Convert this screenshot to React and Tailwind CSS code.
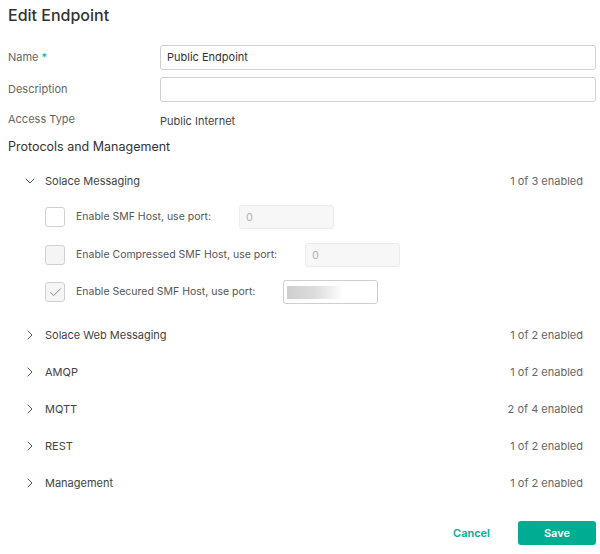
import React from 'react';
import { ChevronDown, ChevronRight, Check } from 'lucide-react';

const font = { fontFamily: 'Inter, "Noto Sans", sans-serif' };

function FieldRow({ label, required, children, className = '' }) {
  return (
    <div className={`flex items-center ${className}`}>
      <div className="w-[152px] shrink-0 text-[11px] text-[#666]">
        {label}
        {required && <span className="ml-[3px] text-[#00ad93]">*</span>}
      </div>
      <div className="flex-1">{children}</div>
    </div>
  );
}

function PortRow({ label, checked, disabled, className = '' }) {
  return (
    <div className={`flex h-[24px] items-center pl-[37px] ${className}`}>
      <div
        className={`flex h-[20px] w-[20px] shrink-0 items-center justify-center rounded-[3px] border border-[#d0d0d0] ${
          disabled || checked ? 'bg-[#f5f5f5]' : 'bg-white'
        }`}
      >
        {checked && <Check className="h-[15px] w-[15px] text-[#888]" strokeWidth={1.5} />}
      </div>
      <span className="ml-[11px] text-[10.5px] text-[#555]">{label}</span>
      {checked ? (
        <div className="ml-[28px] flex h-[24px] w-[95px] items-center rounded-[3px] border border-[#cfcfcf] bg-white px-[3px]">
          <div className="h-[13px] w-[56px] bg-gradient-to-r from-[#cfcfcf] via-[#dcdcdc] to-white" />
        </div>
      ) : (
        <div className="ml-[28px] flex h-[24px] w-[95px] items-center rounded-[3px] border border-[#ececec] bg-[#f7f7f7] px-[6px] text-[11px] text-[#b5b5b5]">
          0
        </div>
      )}
    </div>
  );
}

function Section({ title, status, open, className = '' }) {
  const Icon = open ? ChevronDown : ChevronRight;
  return (
    <div className={`flex h-[30px] items-center pl-[14px] pr-[13px] ${className}`}>
      <Icon className="h-[16px] w-[16px] text-[#555]" strokeWidth={1.5} />
      <span className="ml-[7px] flex-1 text-[11px] text-[#444]">{title}</span>
      <span className="text-[11px] text-[#666]">{status}</span>
    </div>
  );
}

export default function App() {
  return (
    <div className="h-[554px] w-[600px] bg-white pl-[8px] pr-[4px]" style={font}>
      {/* Header */}
      <div className="flex h-[30px] items-center text-[16px] font-medium text-[#333]">Edit Endpoint</div>

      {/* Fields */}
      <FieldRow label="Name" required className="mt-[15px] h-[25px]">
        <div className="flex h-[25px] items-center rounded-[3px] border border-[#cfcfcf] px-[6px] text-[11px] text-[#333]">
          Public Endpoint
        </div>
      </FieldRow>
      <FieldRow label="Description" className="mt-[7px] h-[25px]">
        <div className="h-[25px] rounded-[3px] border border-[#cfcfcf]" />
      </FieldRow>
      <FieldRow label="Access Type" className="mt-[7px] h-[20px]">
        <span className="text-[11px] text-[#444]">Public Internet</span>
      </FieldRow>

      <div className="mt-[8px] flex h-[20px] items-center text-[12.5px] text-[#333]">Protocols and Management</div>

      {/* Protocols */}
      <Section title="Solace Messaging" status="1 of 3 enabled" open className="mt-[9px]" />
      <PortRow label="Enable SMF Host, use port:" className="mt-[9px]" />
      <PortRow label="Enable Compressed SMF Host, use port:" disabled className="mt-[14px]" />
      <PortRow label="Enable Secured SMF Host, use port:" checked className="mt-[13px]" />

      <Section title="Solace Web Messaging" status="1 of 2 enabled" className="mt-[16px]" />
      <Section title="AMQP" status="1 of 2 enabled" className="mt-[7px]" />
      <Section title="MQTT" status="2 of 4 enabled" className="mt-[7px]" />
      <Section title="REST" status="1 of 2 enabled" className="mt-[7px]" />
      <Section title="Management" status="1 of 2 enabled" className="mt-[7px]" />

      {/* Footer */}
      <div className="mt-[23px] flex items-center justify-end">
        <button className="mr-[28px] text-[11px] font-semibold text-[#00ad93]">Cancel</button>
        <button className="h-[24px] w-[78px] rounded-[3px] bg-[#00ad93] text-[11px] font-semibold text-white">
          Save
        </button>
      </div>
    </div>
  );
}
